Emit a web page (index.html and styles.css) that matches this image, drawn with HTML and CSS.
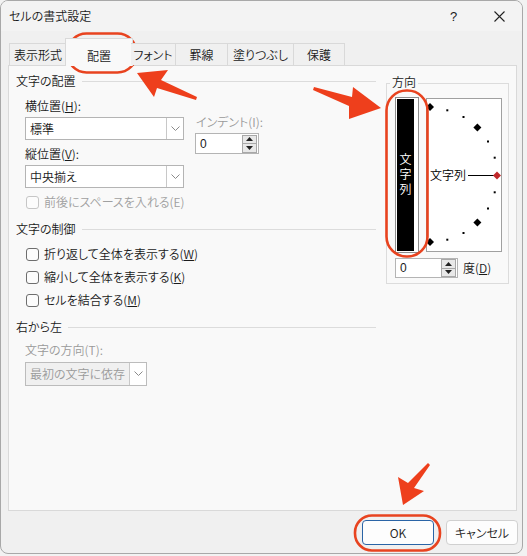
FILE: index.html
```html
<!DOCTYPE html>
<html lang="ja">

<head>
    <meta charset="UTF-8">
    <title>セルの書式設定</title>
    <link rel="stylesheet" href="styles.css">
</head>

<body>
    <div class="dialog">
        <div class="titlebar">
            <span class="title">セルの書式設定</span>
            <div class="title-buttons">
                <span class="tb-btn help">?</span>
                <span class="tb-btn close">
                    <svg width="11" height="11" viewBox="0 0 11 11">
                        <path d="M0.5 0.5 L10.5 10.5 M10.5 0.5 L0.5 10.5" stroke="#222" stroke-width="1.1" fill="none" />
                    </svg>
                </span>
            </div>
        </div>

        <div class="tabs">
            <div class="tab" style="width: 58px">表示形式</div>
            <div class="tab active" style="width: 68px">配置</div>
            <div class="tab" style="width: 45px">フォント</div>
            <div class="tab" style="width: 52px">罫線</div>
            <div class="tab" style="width: 66px">塗りつぶし</div>
            <div class="tab" style="width: 51px">保護</div>
        </div>

        <div class="panel">
            <!-- left column -->
            <div class="left">
                <div class="heading">文字の配置</div>

                <div class="align-row">
                    <div class="align-col">
                        <div class="label first">横位置(<u>H</u>):</div>
                        <div class="select wide">
                            <span class="select-text">標準</span>
                            <span class="select-arrow"><svg width="9" height="6" viewBox="0 0 9 6"><path d="M0.5 0.5 L4.5 4.5 L8.5 0.5" stroke="#8a8a8a" fill="none" /></svg></span>
                        </div>
                        <div class="label">縦位置(<u>V</u>):</div>
                        <div class="select wide">
                            <span class="select-text">中央揃え</span>
                            <span class="select-arrow"><svg width="9" height="6" viewBox="0 0 9 6"><path d="M0.5 0.5 L4.5 4.5 L8.5 0.5" stroke="#8a8a8a" fill="none" /></svg></span>
                        </div>
                    </div>
                    <div class="indent-col">
                        <div class="label disabled-text">インデント(I):</div>
                        <div class="spin indent">
                            <span class="spin-value">0</span>
                            <span class="spin-buttons">
                                <span class="spin-btn"><svg width="7" height="4" viewBox="0 0 7 4"><path d="M0 4 L3.5 0 L7 4 Z" fill="#222" /></svg></span>
                                <span class="spin-btn"><svg width="7" height="4" viewBox="0 0 7 4"><path d="M0 0 L3.5 4 L7 0 Z" fill="#222" /></svg></span>
                            </span>
                        </div>
                    </div>
                </div>

                <div class="check disabled first-check">
                    <span class="box"></span>
                    <span>前後にスペースを入れる(E)</span>
                </div>

                <div class="heading section">文字の制御</div>
                <div class="check first-check">
                    <span class="box"></span>
                    <span>折り返して全体を表示する(<u>W</u>)</span>
                </div>
                <div class="check">
                    <span class="box"></span>
                    <span>縮小して全体を表示する(<u>K</u>)</span>
                </div>
                <div class="check">
                    <span class="box"></span>
                    <span>セルを結合する(<u>M</u>)</span>
                </div>

                <div class="heading section">右から左</div>
                <div class="label sub disabled-text">文字の方向(T):</div>
                <div class="select narrow disabled">
                    <span class="select-text">最初の文字に依存</span>
                    <span class="select-arrow"><svg width="9" height="6" viewBox="0 0 9 6"><path d="M0.5 0.5 L4.5 4.5 L8.5 0.5" stroke="#8a8a8a" fill="none" /></svg></span>
                </div>
            </div>

            <!-- orientation group -->
            <div class="group">
                <div class="group-title">方向</div>
                <div class="orient-row">
                    <div class="vbar">
                        <div class="vbar-inner">文字列</div>
                    </div>
                    <div class="dial">
                        <svg width="74" height="152" viewBox="0 0 74 152" overflow="visible">
                            <g fill="#000">
                                <path d="M3 4 L7 8 L3 12 L-1 8 Z" />
                                <rect x="19.3" y="10.3" width="2" height="2" />
                                <rect x="35.5" y="17" width="2" height="2" />
                                <path d="M50.4 24.6 L54.4 28.6 L50.4 32.6 L46.4 28.6 Z" />
                                <rect x="60" y="41.5" width="2" height="2" />
                                <rect x="66.7" y="57.7" width="2" height="2" />
                                <rect x="66.7" y="92.3" width="2" height="2" />
                                <rect x="60" y="108.5" width="2" height="2" />
                                <path d="M50.4 119.4 L54.4 123.4 L50.4 127.4 L46.4 123.4 Z" />
                                <rect x="35.5" y="133" width="2" height="2" />
                                <rect x="19.3" y="139.7" width="2" height="2" />
                                <path d="M3 139 L7 143 L3 147 L-1 143 Z" />
                            </g>
                            <text x="3" y="80.5" font-size="12" fill="#000" class="dial-text">文字列</text>
                            <line x1="41" y1="76.5" x2="67" y2="76.5" stroke="#000" stroke-width="1" />
                            <path d="M70 72.5 L74 76.5 L70 80.5 L66 76.5 Z" fill="#c0282a" />
                        </svg>
                    </div>
                </div>
                <div class="degree-row">
                    <div class="spin degree">
                        <span class="spin-value">0</span>
                        <span class="spin-buttons">
                            <span class="spin-btn"><svg width="7" height="4" viewBox="0 0 7 4"><path d="M0 4 L3.5 0 L7 4 Z" fill="#222" /></svg></span>
                            <span class="spin-btn"><svg width="7" height="4" viewBox="0 0 7 4"><path d="M0 0 L3.5 4 L7 0 Z" fill="#222" /></svg></span>
                        </span>
                    </div>
                    <span class="degree-label">度(<u>D</u>)</span>
                </div>
            </div>
        </div>

        <div class="footer">
            <button class="btn default">OK</button>
            <button class="btn">キャンセル</button>
        </div>
    </div>

    <!-- red annotations drawn over the dialog -->
    <svg class="marks" width="527" height="556" viewBox="0 0 527 556">
        <g fill="none" stroke="#e8431f" stroke-width="2.6">
            <rect x="67.5" y="33.5" width="69" height="39" rx="19" />
            <rect x="386.5" y="90.5" width="41" height="166" rx="20" />
            <rect x="355" y="515.5" width="85" height="35" rx="17" />
        </g>
        <g fill="#ee3f1c">
            <path d="M137 73 L168 70 L161 80 L197 97 L196 100 L157 88 L154 97 Z" />
            <path d="M381 108 L353 87 L352 97 L314 87 L313 90 L349 106 L349 119 Z" />
            <path d="M403 505 L398 477 L408 483 L428 463 L430 465 L414 488 L424 491 Z" />
        </g>
    </svg>
</body>

</html>
```

FILE: styles.css
```css
body {
    margin: 0;
    background-color: #f2f2f2;
    font-family: "Noto Sans CJK JP", "Noto Sans", sans-serif;
    font-size: 12px;
    font-weight: 350;
    font-feature-settings: "palt";
    color: #1a1a1a;
}

.dialog {
    position: relative;
    width: 521px;
    height: 552px;
    background-color: #f0f0f0;
    border: 1px solid #a8a8a8;
    border-radius: 8px;
    overflow: hidden;
}

/* title bar */
.titlebar {
    height: 30px;
    display: flex;
    align-items: center;
    justify-content: space-between;
    background-color: #f3f3f3;
    padding-left: 8px;
}

.title {
    font-size: 12px;
    line-height: 16px;
}

.title-buttons {
    display: flex;
    height: 30px;
}

.tb-btn {
    width: 45px;
    display: flex;
    align-items: center;
    justify-content: center;
}

.tb-btn.help {
    font-family: "Liberation Sans", sans-serif;
    font-size: 13px;
    margin-right: 1px;
}

/* tabs */
.tabs {
    display: flex;
    align-items: flex-end;
    height: 34px;
    padding-left: 8px;
    position: relative;
    z-index: 1;
}

.tab {
    height: 22px;
    display: flex;
    align-items: center;
    justify-content: center;
    border: 1px solid #d9d9d9;
    border-bottom: none;
    border-left: none;
    background-color: #f0f0f0;
    box-sizing: border-box;
}

.tab:first-child {
    border-left: 1px solid #d9d9d9;
}

.tab.active {
    height: 28px;
    margin: 0 -2px -1px -2px;
    padding-top: 6px;
    background-color: #f9f9f9;
    border-left: 1px solid #d9d9d9;
}

/* panel */
.panel {
    margin: 0 5px 0 7px;
    background-color: #f9f9f9;
    border: 1px solid #d9d9d9;
    display: flex;
    gap: 10px;
    padding: 7px 0 0 7px;
    box-sizing: content-box;
    height: 437px;
}

.left {
    width: 360px;
    display: flex;
    flex-direction: column;
}

.heading {
    display: flex;
    align-items: center;
    line-height: 16px;
    height: 16px;
}

.heading::after {
    content: "";
    flex: 1;
    height: 1px;
    background-color: #dcdcdc;
    margin-left: 6px;
    margin-top: 1px;
}

.heading.section {
    margin-top: 11px;
}

.label {
    line-height: 16px;
    margin-top: 6px;
    padding-left: 9px;
}

.label.first {
    margin-top: 9px;
}

.label.sub {
    margin-top: 7px;
}

.disabled-text {
    color: #9a9a9a;
}

.align-row {
    display: flex;
}

.align-col {
    display: flex;
    flex-direction: column;
}

.indent-col {
    display: flex;
    flex-direction: column;
    padding-top: 25px;
    margin-left: 1px;
}

.indent-col .label {
    margin-top: 0;
    padding-left: 11px;
}

/* dropdowns */
.select {
    display: flex;
    height: 23px;
    margin-top: 3px;
    margin-left: 9px;
    border: 1px solid #b4b4b4;
    background-color: #fff;
    box-sizing: border-box;
}

.select.wide {
    width: 159px;
}

.select.narrow {
    width: 122px;
    height: 24px;
    margin-top: 4px;
}

.select-text {
    flex: 1;
    padding-left: 4px;
    line-height: 21px;
}

.select-arrow {
    width: 16px;
    border-left: 1px solid #c8c8c8;
    display: flex;
    align-items: center;
    justify-content: center;
}

.select.disabled {
    border-color: #bcbcbc;
}

.select.disabled .select-text {
    background-color: #f0f0f0;
    color: #9a9a9a;
}

/* spin boxes */
.spin {
    display: flex;
    align-items: center;
    border: 1px solid #b4b4b4;
    background-color: #fff;
    box-sizing: border-box;
}

.spin.indent {
    width: 64px;
    height: 21px;
    margin-top: 3px;
    margin-left: 10px;
}

.spin-value {
    flex: 1;
    padding-left: 4px;
    font-family: "Liberation Sans", sans-serif;
    font-size: 12px;
}

.spin-buttons {
    display: flex;
    flex-direction: column;
    width: 15px;
    height: 18px;
    margin-right: 1px;
    border: 1px solid #a8a8a8;
    box-sizing: border-box;
}

.spin-btn {
    flex: 1;
    display: flex;
    align-items: center;
    justify-content: center;
    background-color: #e8e8e8;
}

.spin-btn:first-child {
    border-bottom: 1px solid #a8a8a8;
}

/* checkboxes */
.check {
    display: flex;
    align-items: center;
    line-height: 16px;
    margin-top: 7px;
    padding-left: 10px;
    gap: 5px;
}

.check.first-check {
    margin-top: 9px;
}

.check .box {
    width: 13px;
    height: 13px;
    border: 1px solid #6e6e6e;
    border-radius: 3px;
    background-color: #fcfcfc;
    box-sizing: border-box;
}

.check.disabled {
    color: #a0a0a0;
    margin-top: 6px;
}

.check.disabled .box {
    border-color: #c6c6c6;
}

/* orientation group */
.group {
    width: 123px;
    height: 201px;
    margin-top: 10px;
    border: 1px solid #dcdcdc;
    box-sizing: border-box;
    padding-left: 8px;
}

.group-title {
    margin-top: -10px;
    margin-left: -5px;
    padding: 0 2px;
    width: fit-content;
    line-height: 16px;
    background-color: #f9f9f9;
}

.orient-row {
    display: flex;
    margin-top: 7px;
    gap: 7px;
}

.vbar {
    width: 24px;
    height: 156px;
    border: 1px solid #8c8c8c;
    padding: 1px;
    box-sizing: border-box;
    background-color: #fff;
}

.vbar-inner {
    height: 100%;
    background-color: #000;
    color: #fff;
    display: flex;
    align-items: center;
    justify-content: center;
    writing-mode: vertical-rl;
    text-orientation: upright;
    letter-spacing: 3px;
    font-size: 12px;
}

.dial {
    width: 76px;
    height: 154px;
    margin-top: 1px;
    border: 1px solid #a0a0a0;
    background-color: #fff;
    box-sizing: border-box;
}

.dial-text {
    font-family: "Noto Sans CJK JP", sans-serif;
    font-weight: 350;
}

.degree-row {
    display: flex;
    align-items: center;
    margin-top: 5px;
    gap: 5px;
}

.spin.degree {
    width: 63px;
    height: 20px;
}

.degree-label {
    line-height: 16px;
}

/* footer */
.footer {
    display: flex;
    justify-content: flex-end;
    gap: 12px;
    padding: 9px 4px 0 0;
}

.btn {
    width: 72px;
    height: 25px;
    font-family: "Noto Sans CJK JP", sans-serif;
    font-size: 12px;
    font-weight: 350;
    font-feature-settings: "palt";
    background-color: #fdfdfd;
    border: 1px solid #d0d0d0;
    border-radius: 4px;
    color: #1a1a1a;
    padding: 0;
}

.btn.default {
    border: 1px solid #2a64a6;
}

/* annotations */
.marks {
    position: absolute;
    left: 0;
    top: 0;
    pointer-events: none;
}
```
